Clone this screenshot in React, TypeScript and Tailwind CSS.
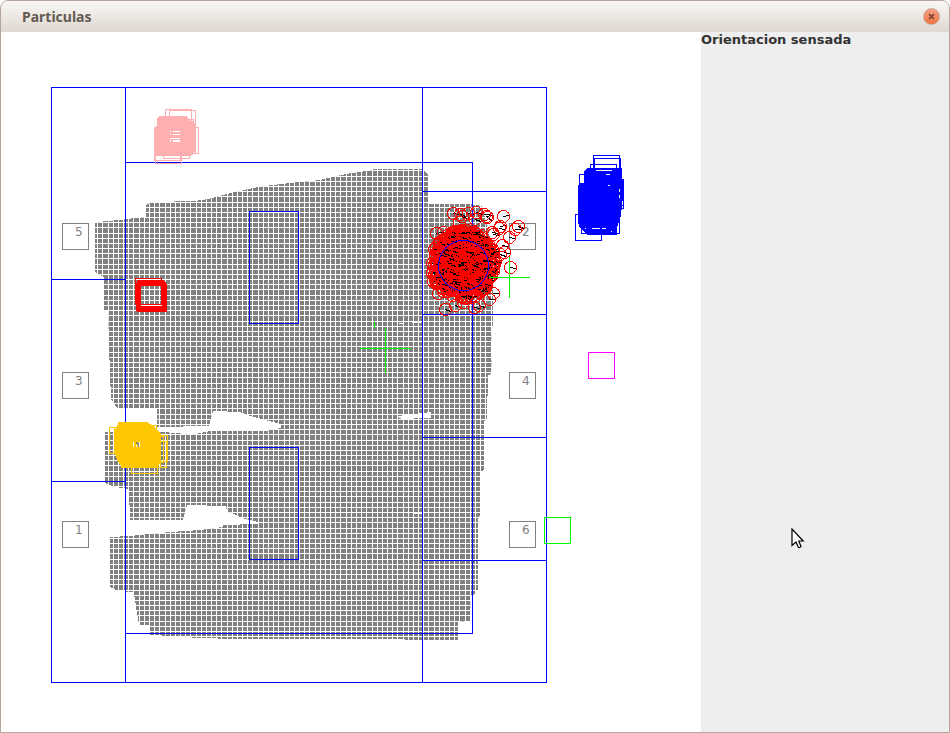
import React from 'react';

type Point = [number, number];

const STEP = 5.174;

const FREE_AREA =
  '95,223 106,221 120,220 135,218 146,217 146,205 153,202 194,201 208,199 223,195 244,190 258,187 272,185 300,182 320,180 346,174 373,170 373,169 422,169 428,174 428,204 470,204 482,206 493,250 493,320 491,345 492,374 488,375 487,418 484,421 484,470 480,472 480,515 478,518 478,589 475,594 471,596 470,621 458,622 458,640 406,640 404,639 218,639 218,638 192,638 192,637 174,637 174,636 150,635 150,625 139,625 134,594 132,592 118,591 110,587 110,537 130,536 148,534 170,532 200,530 223,527 223,525 258,524 258,522 245,519 227,511 226,506 187,505 183,520 130,520 129,489 115,487 105,483 105,432 160,432 178,433 190,435 210,431 265,431 281,428 281,424 250,416 240,412 213,411 209,426 157,427 157,408 117,408 111,399 109,347 108,310 104,310 104,277 102,276 95,272';

const verticals = Array.from({ length: 80 }, (_, i) => Math.floor(113.3 + (i - 4) * STEP));
const horizontals = Array.from({ length: 94 }, (_, i) => Math.floor(269.3 + (i - 20) * STEP));

const boxPath = (points: Point[], size = 26) =>
  points.map(([x, y]) => `M${x + 0.5} ${y + 0.5}h${size}v${size}h-${size}z`).join('');

const pinkBoxes: Point[] = [[165, 109], [169, 110], [172, 127], [155, 137], [163, 132], [167, 119], [154, 134], [169, 127]];
const redBoxes: Point[] = [
  [135, 278], [137, 280], [138, 281], [139, 282], [136, 284], [137, 284], [138, 284], [139, 285], [140, 285], [136, 283], [137, 285], [140, 284], [138, 283],
];
const orangeBoxes: Point[] = [[109, 427], [114, 427], [131, 447], [141, 435], [140, 441], [134, 441], [137, 436], [130, 425], [121, 441]];
const blueBoxes: Point[] = [[593, 155], [594, 158], [590, 164], [579, 174], [597, 182], [575, 214], [593, 207], [581, 207], [597, 179], [595, 168]];

const strays: Point[] = [
  [453, 213], [460, 214], [468, 213], [476, 212], [486, 216], [487, 217], [503, 216], [518, 226], [515, 229], [500, 226],
  [509, 237], [504, 252], [510, 267], [436, 233], [443, 232], [459, 222], [445, 309], [479, 305], [432, 263], [474, 307],
  [434, 274], [433, 281], [438, 293], [500, 254], [502, 245], [493, 293], [489, 299], [455, 305], [463, 302], [437, 251],
  [499, 228], [493, 234], [492, 232], [484, 214], [475, 219], [462, 216],
];

function makeParticles(): { c: Point; tip: Point }[] {
  let seed = 7;
  const next = () => {
    seed = (seed * 16807) % 2147483647;
    return seed / 2147483647;
  };
  const centers: Point[] = [];
  for (let i = 0; i < 620; i++) {
    const angle = next() * Math.PI * 2;
    const radius = Math.pow(next(), 0.58);
    centers.push([
      Math.round(463 + Math.cos(angle) * radius * 32),
      Math.round(264 + Math.sin(angle) * radius * 35),
    ]);
  }
  return [...strays, ...centers].map((c) => {
    const heading = (next() - 0.35) * 0.7;
    return { c, tip: [Math.round(c[0] + 6 * Math.cos(heading)), Math.round(c[1] + 6 * Math.sin(heading))] as Point };
  });
}

const particles = makeParticles();

const cells: { label: string; x: number; y: number }[] = [
  { label: '5', x: 62, y: 223 },
  { label: '3', x: 62, y: 372 },
  { label: '1', x: 62, y: 521 },
  { label: '2', x: 509, y: 223 },
  { label: '4', x: 509, y: 372 },
  { label: '6', x: 509, y: 521 },
];

function ParticleMap() {
  return (
    <svg
      viewBox="1 32 700 700"
      className="block h-[700px] w-[700px] shrink-0 bg-white"
      fill="none"
      shapeRendering="crispEdges"
      role="img"
      aria-label="Particulas"
    >
      <defs>
        <clipPath id="free-area">
          <polygon points={FREE_AREA} />
        </clipPath>
      </defs>

      {cells.map((cell) => (
        <g key={cell.label}>
          <path d={boxPath([[cell.x, cell.y]])} stroke="#808080" />
          <text x={cell.x + 13} y={cell.y + 13} fill="#808080" className="font-['DejaVu_Sans'] text-[12px]">
            {cell.label}
          </text>
        </g>
      ))}

      <polygon points={FREE_AREA} fill="#808080" />
      <g clipPath="url(#free-area)" fill="#fff">
        {verticals.map((x) => (
          <rect key={x} x={x} y={165} width={1} height={480} />
        ))}
        {horizontals.map((y) => (
          <rect key={y} x={90} y={y} width={410} height={1} />
        ))}
        <path d="M398 416 431 412V418H413V419H402L398 417ZM413 513 425 512 424 514H413ZM399 323h5v1h-5zM412 322h9v1h-9z" />
      </g>

      <path
        stroke="#0000ff"
        d="M51.5 87.5H546.5V682.5H51.5ZM125.5 87.5V682.5M422.5 87.5V682.5M51.5 279.5H125.5M51.5 481.5H125.5M125.5 162.5H472.5V633.5H125.5ZM422.5 191.5H546.5M422.5 314.5H546.5M422.5 437.5H546.5M422.5 560.5H546.5M249.5 211.5H298.5V323.5H249.5ZM249.5 447.5H298.5V559.5H249.5Z"
      />
      <path stroke="#00ff00" d="M360 348.5H411M385.5 328V373M374.5 322V328" />

      <path
        fill="#ffafaf"
        d="M157 118 160 116H187L189 120 194 122 196 127V147L194 154 190 156H156L154 160V127L157 126Z"
      />
      <path stroke="#ffafaf" d={boxPath(pinkBoxes)} />
      <path fill="#ffafaf" d="M168 129H183V145H168Z" />
      <path fill="#fff" d="M170 131h1v1h-1zM173 131h7v1h-7zM170 134h1v1h-1zM173 134h7v1h-7zM170 138h10v1h-10zM170 140h1v2h-1zM173 140h7v2h-7z" />

      <path stroke="#ff0000" d={boxPath(redBoxes)} />

      <path
        fill="#ffc800"
        d="M118 422H147L152 425 157 430 161 433V462L158 467H122L117 460 114 450V432L118 424Z"
      />
      <path stroke="#ffc800" d={boxPath(orangeBoxes)} />
      <path fill="#fff" d="M133 442h1v5h-1zM136 445h1v2h-1zM139 442h1v5h-1z" />
      <path fill="#808080" d="M136 442h2v2h-2zM138 443h1v4h-1z" />

      <path
        fill="#0000ff"
        d="M584 171 587 168H622V177L624 190 622 205 621 216 617 228V235H587L580 228 578 223V186L580 183H584Z"
      />
      <path stroke="#0000ff" d={boxPath(blueBoxes)} />
      <path fill="#fff" d="M606 174h4v1h-4zM608 185h2v1h-2zM596 170h16v1h-16zM592 228h8v1h-8zM602 228h4v1h-4zM619 189h1v3h-1zM619 195h1v3h-1zM585 228h1v1h-1zM611 231h1v1h-1z" />

      <path stroke="#ff00ff" d={boxPath([[588, 352]])} />
      <path stroke="#00ff00" d={boxPath([[544, 517]])} />

      {particles.map(({ c, tip }, i) => (
        <g key={i}>
          <line x1={c[0]} y1={c[1] + 0.5} x2={tip[0]} y2={tip[1] + 0.5} stroke="#000" />
          <circle cx={c[0] + 0.5} cy={c[1] + 0.5} r={6} stroke="#ff0000" />
        </g>
      ))}
      <circle cx={463.5} cy={265.5} r={25} stroke="#0000ff" />
      <path stroke="#00ff00" d="M489 277.5H530M509.5 257V298" />
    </svg>
  );
}

function Pointer() {
  return (
    <svg viewBox="0 0 14 22" className="absolute top-[496px] left-[90px] h-[22px] w-[14px]" aria-hidden="true">
      <path d="M1 1V17.5L5 14 7.5 19.5Q9 20 10 18.5L7.8 13H12.2Z" fill="#fff" stroke="#000" strokeWidth="1.2" />
    </svg>
  );
}

export default function App() {
  return (
    <div className="flex min-h-screen flex-col overflow-hidden rounded-t-lg border border-[#b5a699] bg-[#eeeeee]">
      <header className="flex h-[31px] items-center justify-between bg-linear-to-b from-[#f9f8f6] to-[#dfd7d0] pr-[9px] pl-[21px]">
        <h1 className="font-['Noto_Sans','DejaVu_Sans',sans-serif] text-[14px] leading-4 font-bold text-[#635a52]">
          Particulas
        </h1>
        <button
          type="button"
          aria-label="Cerrar"
          className="flex size-[17px] items-center justify-center rounded-full border border-[#c9a898] bg-linear-to-b from-[#f3a184] to-[#f0703f]"
        >
          <svg viewBox="0 0 7 7" className="size-[7px]" stroke="#68382a" strokeWidth="1.3" aria-hidden="true">
            <path d="M1 1 6 6M6 1 1 6" />
          </svg>
        </button>
      </header>
      <main className="flex flex-1">
        <div className="shrink-0 bg-white">
          <ParticleMap />
        </div>
        <aside className="relative flex-1">
          <p className="font-['DejaVu_Sans',sans-serif] text-[13px] leading-4 font-bold whitespace-nowrap text-[#333333]">
            Orientacion sensada
          </p>
          <Pointer />
        </aside>
      </main>
    </div>
  );
}
